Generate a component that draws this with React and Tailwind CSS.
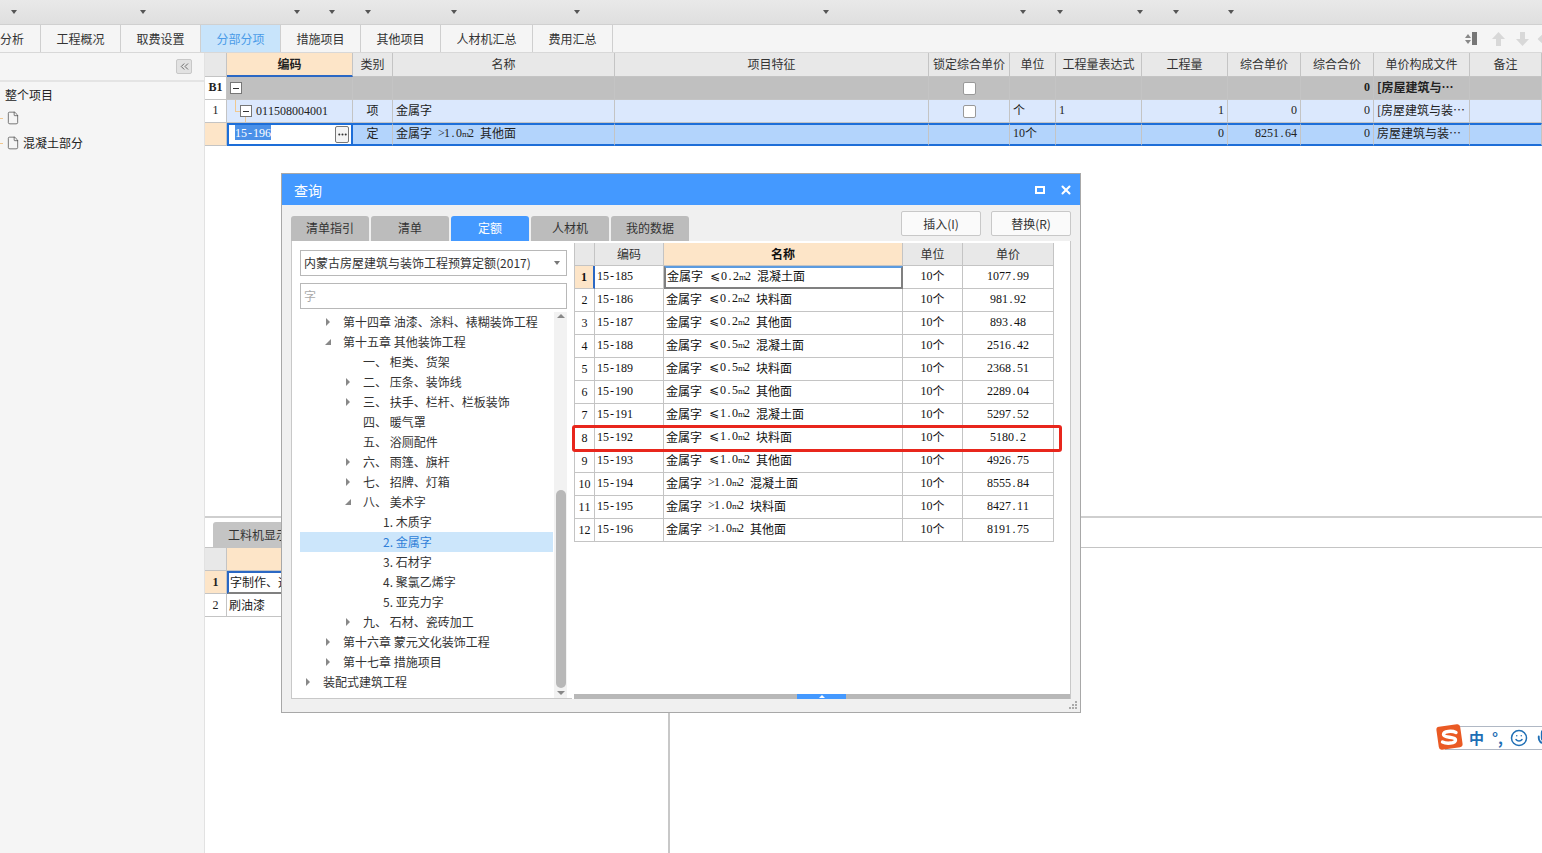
import { ChevronsLeft, File, Mic, MoreHorizontal, Smile, X } from 'lucide-react';

const carets = ['ml-[10px]', 'ml-[122px]', 'ml-[147px]', 'ml-[28px]', 'ml-[29px]', 'ml-[79px]', 'ml-[116px]', 'ml-[242px]', 'ml-[190px]', 'ml-[30px]', 'ml-[73px]', 'ml-[29px]', 'ml-[48px]'];

const navTabs = [
  ['分析', 'w-[41px] justify-start'],
  ['工程概况', 'w-[80px]'],
  ['取费设置', 'w-[80px]'],
  ['分部分项', 'w-[80px] bg-[#c8e4fb] text-[#4a9be8]'],
  ['措施项目', 'w-[80px]'],
  ['其他项目', 'w-[80px]'],
  ['人材机汇总', 'w-[92px]'],
  ['费用汇总', 'w-[80px]'],
];

const mainCols = 'grid grid-cols-[22px_126px_40px_222px_314px_81px_46px_86px_86px_73px_73px_96px_72px]';
const dlgCols = 'grid grid-cols-[21px_69px_239px_60px_91px]';

const headCell = 'flex items-center justify-center border-r border-b border-[#c4c4c4] bg-[#e8e8e8] text-[#333]';
const cell = 'flex items-center border-r border-b border-[#c4c4c4] px-[3px] pb-[3px] overflow-hidden whitespace-nowrap';

const mainHead = ['', '编码', '类别', '名称', '项目特征', '锁定综合单价', '单位', '工程量表达式', '工程量', '综合单价', '综合合价', '单价构成文件', '备注'];

const tree = [
  [1, 'r', '第十四章 油漆、涂料、裱糊装饰工程'],
  [1, 'd', '第十五章 其他装饰工程'],
  [2, '', '一、 柜类、货架'],
  [2, 'r', '二、 压条、装饰线'],
  [2, 'r', '三、 扶手、栏杆、栏板装饰'],
  [2, '', '四、 暖气罩'],
  [2, '', '五、 浴厕配件'],
  [2, 'r', '六、 雨篷、旗杆'],
  [2, 'r', '七、 招牌、灯箱'],
  [2, 'd', '八、 美术字'],
  [3, '', '1. 木质字'],
  [3, '', '2. 金属字', true],
  [3, '', '3. 石材字'],
  [3, '', '4. 聚氯乙烯字'],
  [3, '', '5. 亚克力字'],
  [2, 'r', '九、 石材、瓷砖加工'],
  [1, 'r', '第十六章 蒙元文化装饰工程'],
  [1, 'r', '第十七章 措施项目'],
  [0, 'r', '装配式建筑工程'],
];

const indent = ['pl-[6px]', 'pl-[26px]', 'pl-[46px]', 'pl-[66px]'];

const quota = [
  ['15-185', '⩽0.2m2 混凝土面', '1077.99'],
  ['15-186', '⩽0.2m2 块料面', '981.92'],
  ['15-187', '⩽0.2m2 其他面', '893.48'],
  ['15-188', '⩽0.5m2 混凝土面', '2516.42'],
  ['15-189', '⩽0.5m2 块料面', '2368.51'],
  ['15-190', '⩽0.5m2 其他面', '2289.04'],
  ['15-191', '⩽1.0m2 混凝土面', '5297.52'],
  ['15-192', '⩽1.0m2 块料面', '5180.2'],
  ['15-193', '⩽1.0m2 其他面', '4926.75'],
  ['15-194', '>1.0m2 混凝土面', '8555.84'],
  ['15-195', '>1.0m2 块料面', '8427.11'],
  ['15-196', '>1.0m2 其他面', '8191.75'],
];

// half width cells like the bitmap font in the picture: 6px per latin char
function Sim({ children }) {
  return String(children)
    .split(/([\x20-\x7e⩽]+)/)
    .map((part, i) =>
      /[\x20-\x7e⩽]/.test(part) ? (
        <span key={i} className="whitespace-pre font-['Liberation_Serif','DejaVu_Sans',serif]">
          {[...part].map((ch, j) => (
            <span key={j} className={`inline-block text-center ${ch === '⩽' ? 'w-[12px]' : 'w-[6px]'} ${ch === 'm' ? 'text-[9px]' : ''}`}>{ch}</span>
          ))}
        </span>
      ) : (
        <span key={i}>{part}</span>
      )
    );
}

function Caret() {
  return <span className="block h-0 w-0 border-x-[3px] border-t-[4px] border-x-transparent border-t-[#777]" />;
}

function MinusBox({ className }) {
  return (
    <span className={`flex h-[12px] w-[12px] items-center justify-center border border-[#777] bg-white ${className}`}>
      <span className="block h-px w-[6px] bg-[#333]" />
    </span>
  );
}

function Check() {
  return <span className="block h-[13px] w-[13px] rounded-[2px] border border-[#999] bg-white" />;
}

function BlockArrow({ className }) {
  return (
    <svg className={className} width="13" height="14" viewBox="0 0 13 14" fill="#d8d8d8">
      <path d="M6.5 0 L13 7 H9 V14 H4 V7 H0 Z" />
    </svg>
  );
}

function TopTable() {
  return (
    <div className="text-[12px] text-[#222]">
      <div className={`${mainCols} h-[24px]`}>
        {mainHead.map((h, i) =>
          i === 1 ? (
            <div key={i} className="flex items-center justify-center border-r border-b-2 border-[#c4c4c4] border-b-[#2b68c4] bg-[#fde5c8] font-bold">{h}</div>
          ) : (
            <div key={i} className={`${headCell} pb-[2px]`}>{h}</div>
          )
        )}
      </div>

      <div className={`${mainCols} h-[23px] bg-[#c0c0c0] font-bold`}>
        <div className={`${cell} justify-center bg-white font-['Liberation_Serif',serif]`}>B1</div>
        <div className={`${cell} !px-0 !pb-0`}><MinusBox className="ml-[3px]" /></div>
        <div className={cell} /><div className={cell} /><div className={cell} />
        <div className={`${cell} justify-center !pb-0`}><Check /></div>
        <div className={cell} /><div className={cell} /><div className={cell} /><div className={cell} />
        <div className={`${cell} justify-end font-['Liberation_Serif',serif]`}>0</div>
        <div className={cell}>[房屋建筑与⋯</div>
        <div className={cell} />
      </div>

      <div className={`${mainCols} h-[23px] bg-[#dbe8fd]`}>
        <div className={`${cell} justify-center bg-white`}><Sim>1</Sim></div>
        <div className={`${cell} relative !px-0 !pb-0`}>
          <span className="absolute top-0 left-[8px] h-[12px] w-[6px] border-b border-l border-[#f0c890]" />
          <span className="absolute top-[17px] left-[18px] h-[6px] w-px bg-[#f0c890]" />
          <MinusBox className="relative ml-[13px]" />
          <span className="mb-[2px] ml-[4px]"><Sim>011508004001</Sim></span>
        </div>
        <div className={`${cell} justify-center`}>项</div>
        <div className={cell}>金属字</div>
        <div className={cell} />
        <div className={`${cell} justify-center !pb-0`}><Check /></div>
        <div className={cell}>个</div>
        <div className={cell}><Sim>1</Sim></div>
        <div className={`${cell} justify-end`}><Sim>1</Sim></div>
        <div className={`${cell} justify-end`}><Sim>0</Sim></div>
        <div className={`${cell} justify-end`}><Sim>0</Sim></div>
        <div className={cell}>[房屋建筑与装⋯</div>
        <div className={cell} />
      </div>

      <div className={`${mainCols} h-[23px] bg-[#b3d4fc] leading-[14px]`}>
        <div className={`${cell} bg-[#fde5c8]`} />
        <div className="relative flex items-start border-2 border-[#1d6ed8] bg-white pl-[6px]">
          <span className="bg-[#4a90e8] leading-[13px] text-white"><Sim>15-196</Sim></span>
          <span className="absolute top-[1px] right-[2px] flex h-[17px] w-[14px] items-center justify-center rounded-[2px] border border-[#777] bg-[#f4f4f4]">
            <MoreHorizontal size={11} strokeWidth={2.5} className="text-[#333]" />
          </span>
        </div>
        <div className="flex items-center justify-center border-y-2 border-r border-[#1d6ed8] border-r-[#c4c4c4] pb-[3px]">定</div>
        {[
          ['', <Sim key="a">{'金属字 >1.0m2 其他面'}</Sim>],
          ['', ''],
          ['', ''],
          ['', <Sim key="b">10个</Sim>],
          ['', ''],
          ['justify-end', <Sim key="c">0</Sim>],
          ['justify-end', <Sim key="d">8251.64</Sim>],
          ['justify-end', <Sim key="e">0</Sim>],
          ['', '房屋建筑与装⋯'],
          ['', ''],
        ].map(([cls, val], i) => (
          <div key={i} className={`flex items-center overflow-hidden border-y-2 border-r border-[#1d6ed8] border-r-[#c4c4c4] px-[3px] pb-[3px] whitespace-nowrap ${cls}`}>{val}</div>
        ))}
      </div>
    </div>
  );
}

function BottomPane() {
  return (
    <div className="flex min-h-0 flex-1 border-t-2 border-[#cfcfcf] text-[12px] text-[#222]">
      <div className="flex w-[465px] flex-col border-r-2 border-[#c8c8c8]">
        <div className="flex h-[30px] items-end border-b border-[#c4c4c4] pl-[8px]">
          <div className="flex h-[25px] w-[100px] items-center rounded-t-[3px] bg-[#c4c4c4] pl-[15px] whitespace-nowrap text-[#333]">工料机显示</div>
        </div>
        <div className="grid h-[23px] grid-cols-[22px_1fr]">
          <div className={headCell} />
          <div className="border-b border-[#c4c4c4] bg-[#fde5c8]" />
        </div>
        <div className="grid h-[23px] grid-cols-[22px_1fr]">
          <div className="flex items-center justify-center border-r border-b border-[#c4c4c4] bg-[#fde5c8] font-['Liberation_Serif',serif] font-bold">1</div>
          <div className="flex items-center border-y-2 border-l-2 border-[#2b68c4] border-b-[#808080] bg-white pb-px pl-px whitespace-nowrap">字制作、运输</div>
        </div>
        <div className="grid h-[23px] grid-cols-[22px_1fr]">
          <div className="flex items-center justify-center border-r border-b border-[#c4c4c4]"><Sim>2</Sim></div>
          <div className="flex items-center border-b border-[#c4c4c4] pl-[2px]">刷油漆</div>
        </div>
      </div>
      <div className="flex-1">
        <div className="h-[30px] border-b border-[#c4c4c4]" />
      </div>
    </div>
  );
}

function QuotaGrid() {
  return (
    <div className="text-[12px] text-[#111]">
      <div className={`${dlgCols} h-[23px]`}>
        <div className={`${headCell} border-l`} />
        <div className={headCell}>编码</div>
        <div className="flex items-center justify-center border-r border-b border-[#c4c4c4] bg-[#fde5c8] font-bold">名称</div>
        <div className={headCell}>单位</div>
        <div className={headCell}>单价</div>
      </div>
      {quota.map((row, i) => (
        <div key={row[0]} className={`${dlgCols} h-[23px] leading-[16px]`}>
          {i === 0 ? (
            <div className="flex items-center justify-center border-r-2 border-b border-l border-[#c4c4c4] border-r-[#2b68c4] bg-[#fde5c8] font-['Liberation_Serif',serif] font-bold">1</div>
          ) : (
            <div className={`${cell} justify-center border-l !pb-0`}><Sim>{i + 1}</Sim></div>
          )}
          <div className={`${cell} !px-[2px]`}><Sim>{row[0]}</Sim></div>
          {i === 0 ? (
            <div className="flex items-center overflow-hidden border-2 border-[#808080] border-t-[#5b9be0] pb-[3px] pl-px whitespace-nowrap"><Sim>{`金属字 ${row[1]}`}</Sim></div>
          ) : (
            <div className={`${cell} !px-[2px]`}><Sim>{`金属字 ${row[1]}`}</Sim></div>
          )}
          <div className={`${cell} justify-center`}><Sim>10个</Sim></div>
          <div className={`${cell} justify-center`}><Sim>{row[2]}</Sim></div>
        </div>
      ))}
    </div>
  );
}

function TreeRow({ level, mark, label, active }) {
  return (
    <div className={`flex h-[20px] items-center ${indent[level]} ${active ? 'bg-[#cce6fb] text-[#2f7fd8]' : 'text-[#333]'}`}>
      <span className="mr-[13px] flex w-[4px] justify-center">
        {mark === 'r' && <span className="block h-0 w-0 border-y-[4px] border-l-[4px] border-y-transparent border-l-[#888]" />}
        {mark === 'd' && <span className="block h-0 w-0 border-b-[6px] border-l-[6px] border-b-[#888] border-l-transparent" />}
      </span>
      <span className="whitespace-pre">{label}</span>
    </div>
  );
}

function QueryDialog() {
  return (
    <div className="absolute top-[173px] left-[281px] flex h-[540px] w-[800px] flex-col border border-[#a8a8a8] bg-[#f0f0f0] text-[12px]">
      <div className="flex h-[31px] shrink-0 items-center justify-between bg-[#4499ff] pt-px pr-[7px] pl-[12px] text-white">
        <span className="text-[14px]">查询</span>
        <div className="flex items-center gap-[14px]">
          <span className="block h-[8px] w-[10px] border-2 border-white" />
          <X size={14} strokeWidth={3.5} />
        </div>
      </div>

      <div className="flex h-[36px] shrink-0 items-end justify-between px-[9px]">
        <div className="flex gap-[2px]">
          {['清单指引', '清单', '定额', '人材机', '我的数据'].map((t) => (
            <div key={t} className={`flex h-[25px] w-[78px] items-center justify-center rounded-t-[3px] pb-px ${t === '定额' ? 'bg-[#4499ff] text-white' : 'bg-[#bcbcbc] text-[#333]'}`}>{t}</div>
          ))}
        </div>
        <div className="mb-[5px] flex gap-[10px]">
          {['插入(I)', '替换(R)'].map((t) => (
            <button key={t} className="h-[25px] w-[80px] rounded-[2px] border border-[#c8c8c8] bg-[#fafafa] pt-px text-[#333]">{t}</button>
          ))}
        </div>
      </div>

      <div className="mx-[9px] flex h-[458px] shrink-0 bg-white">
        <div className="flex w-[281px] flex-col border-b border-l border-[#c8c8c8] pt-[9px] pl-[8px]">
          <div className="flex h-[26px] w-[267px] items-center justify-between border border-[#b8b8b8] pr-[6px] pl-[3px] whitespace-nowrap text-[#333]">
            内蒙古房屋建筑与装饰工程预算定额(2017)
            <Caret />
          </div>
          <div className="mt-[7px] flex h-[26px] w-[267px] items-center border border-[#b8b8b8] pl-[3px] text-[#aaa]">字</div>
          <div className="mt-[3px] flex min-h-0 flex-1">
            <div className="w-[253px]">
              {tree.map(([level, mark, label, active]) => (
                <TreeRow key={label} level={level} mark={mark} label={label} active={active} />
              ))}
            </div>
            <div className="ml-[1px] flex w-[13px] flex-col items-center bg-[#f2f2f2] pb-[1px]">
              <span className="mt-[2px] block h-0 w-0 border-x-[4px] border-b-[4px] border-x-transparent border-b-[#888]" />
              <span className="mt-[172px] h-[198px] w-[10px] rounded-full bg-[#b8b8b8]" />
              <span className="mt-[3px] block h-0 w-0 border-x-[4px] border-t-[4px] border-x-transparent border-t-[#888]" />
            </div>
          </div>
        </div>
        <div className="ml-[2px] flex flex-1 flex-col border-r border-[#c8c8c8] pt-[2px]">
          <QuotaGrid />
          <div className="mt-auto flex h-[5px] justify-start bg-[#b8b8b8]">
            <span className="ml-[223px] flex h-[5px] w-[49px] justify-center bg-[#4499ff]">
              <span className="mt-[1px] block h-0 w-0 border-x-[3px] border-b-[3px] border-x-transparent border-b-white" />
            </span>
          </div>
        </div>
      </div>

      <div className="flex flex-1 items-end justify-end pr-[3px] pb-[3px]">
        <svg width="8" height="8" viewBox="0 0 8 8" fill="#aaa">
          <rect x="6" y="0" width="2" height="2" />
          <rect x="3" y="3" width="2" height="2" />
          <rect x="6" y="3" width="2" height="2" />
          <rect x="0" y="6" width="2" height="2" />
          <rect x="3" y="6" width="2" height="2" />
          <rect x="6" y="6" width="2" height="2" />
        </svg>
      </div>

      {/* 红框标注 */}
      <div className="absolute top-[251px] left-[290px] h-[27px] w-[490px] rounded-[3px] border-[3px] border-[#e8261c]" />
    </div>
  );
}

function ImeBar() {
  return (
    <div className="absolute top-[723px] left-[1435px] flex h-[28px] w-[107px] items-center overflow-hidden">
      <div className="mt-[1px] ml-[10px] flex h-[24px] w-full shrink-0 items-center gap-[8px] border-y border-[#b0b8c4] bg-white pl-[24px] text-[#1f6fb5]">
        <span className="text-[15px] leading-none font-bold">中</span>
        <span className="w-[13px] text-[15px] leading-none font-bold">°,</span>
        <Smile size={18} strokeWidth={2} className="-mx-px shrink-0" />
        <Mic size={18} strokeWidth={2.5} className="shrink-0" />
      </div>
      <svg className="absolute top-0 left-0" width="29" height="28" viewBox="0 0 29 28">
        <rect x="2.5" y="2.5" width="24" height="23" rx="3" fill="#ea5a24" transform="rotate(-8 14.5 14)" />
        <path d="M21 9.5 C17 7.5 8.5 8 8.5 11.5 C8.5 15.5 20.5 13 20.5 17 C20.5 20.5 11.5 21 7.5 19" fill="none" stroke="#fff" strokeWidth="3.4" strokeLinecap="round" />
      </svg>
    </div>
  );
}

export default function App() {
  return (
    <div className="relative flex h-[853px] w-[1542px] flex-col overflow-hidden bg-white font-['Noto_Sans_CJK_SC','Liberation_Sans',sans-serif] text-[12px]">
      {/* 顶部工具栏 */}
      <div className="flex h-[25px] shrink-0 items-center border-b border-[#d0d0d0] bg-gradient-to-b from-[#e9e9e9] to-[#dfdfdf] pb-px">
        {carets.map((c, i) => (
          <span key={i} className={`${c} w-[7px]`}><span className="mx-auto block h-0 w-0 border-x-[3px] border-t-[4px] border-x-transparent border-t-[#555]" /></span>
        ))}
      </div>

      {/* 页签 */}
      <div className="flex h-[27px] shrink-0 items-stretch bg-[#f5f5f5] text-[#333]">
        {navTabs.map(([t, cls]) => (
          <div key={t} className={`flex items-center justify-center border-r border-[#cfcfcf] pt-px ${cls}`}>{t}</div>
        ))}
        <div className="ml-auto flex items-center">
          <span className="mr-[15px] flex items-center gap-[1px]">
            <span className="flex flex-col gap-[2px]">
              <span className="block h-0 w-0 border-x-[3px] border-b-[4px] border-x-transparent border-b-[#888]" />
              <span className="block h-0 w-0 border-x-[3px] border-t-[4px] border-x-transparent border-t-[#888]" />
            </span>
            <span className="h-[13px] w-[5px] bg-[#777]" />
          </span>
          <BlockArrow className="mr-[11px]" />
          <BlockArrow className="mr-[9px] rotate-180" />
          <BlockArrow className="-mr-[9px] -rotate-90" />
        </div>
      </div>

      <div className="flex min-h-0 flex-1 border-t border-[#d8d8d8]">
        {/* 左侧树 */}
        <div className="flex w-[205px] shrink-0 flex-col border-r border-[#e2e2e2] bg-[#f5f5f5] text-[#222]">
          <div className="flex h-[29px] shrink-0 items-start justify-end border-b-2 border-[#e4e4e4] pt-[6px] pr-[12px]">
            <span className="flex h-[15px] w-[16px] items-center justify-center rounded-[2px] border border-[#c8c8c8] bg-[#e2e2e2]">
              <ChevronsLeft size={13} strokeWidth={1.75} className="text-[#666]" />
            </span>
          </div>
          <div className="ml-[5px] flex h-[26px] items-center">整个项目</div>
          <div className="flex h-[20px] items-center">
            <span className="mr-[3px] h-px w-[3px] bg-[#f0c890]" />
            <File size={14} strokeWidth={1.2} className="text-[#444]" />
          </div>
          <div className="flex h-[30px] items-center">
            <span className="mr-[3px] h-px w-[3px] bg-[#f0c890]" />
            <File size={14} strokeWidth={1.2} className="mr-[3px] text-[#444]" />
            混凝土部分
          </div>
        </div>

        {/* 主区 */}
        <div className="flex min-w-0 flex-1 flex-col">
          <div className="h-[463px] shrink-0">
            <TopTable />
          </div>
          <BottomPane />
        </div>
      </div>

      <QueryDialog />
      <ImeBar />
    </div>
  );
}
